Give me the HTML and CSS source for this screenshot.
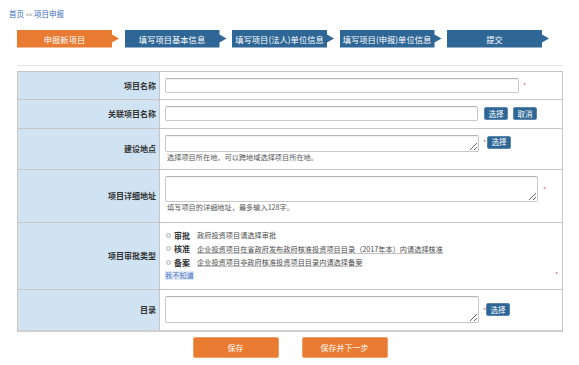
FILE: index.html
```html
<!DOCTYPE html>
<html lang="zh-CN">
<head>
<meta charset="utf-8">
<title>项目申报</title>
<link rel="stylesheet" href="styles.css">
</head>
<body>
<div class="crumb"><a class="crumb-link">首页</a> <span class="crumb-sep">&gt;&gt;</span> <a class="crumb-link">项目申报</a></div>
<div class="main">
  <div class="steps">
    <div class="step step-active">申报新项目</div>
    <div class="step">填写项目基本信息</div>
    <div class="step">填写项目(法人)单位信息</div>
    <div class="step">填写项目(申报)单位信息</div>
    <div class="step">提交</div>
  </div>
  <div class="rule"></div>
  <div class="form">
    <div class="row r1">
      <div class="label">项目名称</div>
      <div class="cell cell-center">
        <input class="field w-name" type="text"><span class="req">*</span>
      </div>
    </div>
    <div class="row r2">
      <div class="label">关联项目名称</div>
      <div class="cell cell-center">
        <input class="field w-rel" type="text">
        <button class="sbtn first">选择</button><button class="sbtn">取消</button>
      </div>
    </div>
    <div class="row r3">
      <div class="label">建设地点</div>
      <div class="cell cell-col">
        <div class="line-top">
          <textarea class="area w-loc h-loc"></textarea><span class="req">*</span><button class="sbtn">选择</button>
        </div>
        <div class="help">选择项目所在地，可以跨地域选择项目所在地。</div>
      </div>
    </div>
    <div class="row r4">
      <div class="label">项目详细地址</div>
      <div class="cell cell-col">
        <div class="line-mid">
          <textarea class="area w-addr h-addr"></textarea><span class="req req-wide">*</span>
        </div>
        <div class="help">填写项目的详细地址，最多输入128字。</div>
      </div>
    </div>
    <div class="row r5">
      <div class="label">项目审批类型</div>
      <div class="cell cell-types">
        <div class="types">
          <div class="opt"><span class="radio"></span><b class="opt-name">审批</b><span class="opt-desc">政府投资项目请选择审批</span></div>
          <div class="opt"><span class="radio"></span><b class="opt-name">核准</b><span class="opt-desc opt-ul">企业投资项目在省政府发布政府核准投资项目目录（2017年本）内请选择核准</span></div>
          <div class="opt"><span class="radio"></span><b class="opt-name">备案</b><span class="opt-desc opt-ul">企业投资项目非政府核准投资项目目录内请选择备案</span></div>
          <div class="opt"><a class="dunno">我不知道</a></div>
        </div>
        <span class="req req-end">*</span>
      </div>
    </div>
    <div class="row r6">
      <div class="label">目录</div>
      <div class="cell cell-center">
        <textarea class="area w-cat h-cat"></textarea><span class="req">*</span><button class="sbtn">选择</button>
      </div>
    </div>
  </div>
  <div class="actions">
    <button class="bbtn">保存</button>
    <button class="bbtn">保存并下一步</button>
  </div>
</div>
</body>
</html>
```
FILE: styles.css
```css
html, body {
  margin: 0;
  padding: 0;
  background: #ffffff;
}
body {
  font-family: "Noto Sans CJK SC", "Noto Sans", sans-serif;
  color: #333333;
  font-size: 8px;
}
.crumb {
  padding: 9px 0 0 9px;
  font-size: 7.5px;
  line-height: 10px;
  height: 10px;
}
.crumb-link {
  color: #3b6bb8;
}
.crumb-sep {
  color: #888888;
  font-size: 6px;
}
.main {
  margin-left: 17px;
  width: 546px;
}
.steps {
  display: flex;
  gap: 5.5px;
  margin-top: 10.5px;
}
.step {
  width: 95px;
  padding-right: 7px;
  height: 18px;
  line-height: 18px;
  text-align: center;
  color: #ffffff;
  font-size: 8.3px;
  background: #2e6695;
  clip-path: polygon(0 0, 95px 0, 95px 5px, 102px 9px, 95px 13px, 95px 100%, 0 100%);
  white-space: nowrap;
}
.step-active {
  background: #e87a31;
}
.rule {
  margin-top: 17px;
  height: 1px;
  background: #e4e4e4;
}
.form {
  margin-top: 5px;
  border: 1px solid #c6c6c6;
  border-bottom: none;
}
.row {
  display: grid;
  grid-template-columns: 142px 1fr;
  border-bottom: 1px solid #c6c6c6;
}
.r1 { height: 27px; }
.r2 { height: 28px; }
.r3 { height: 40px; }
.r4 { height: 52px; }
.r5 { height: 66px; }
.r6 { height: 40px; }
.r6 { border-bottom: 2px solid #cfcfcf; }
.label {
  background: #cfe3f2;
  border-right: 1px solid #c6c6c6;
  display: flex;
  align-items: center;
  justify-content: flex-end;
  padding-right: 3px;
  font-weight: bold;
  font-size: 8px;
  color: #333333;
}
.cell {
  padding-left: 5px;
  display: flex;
}
.cell-center {
  align-items: center;
}
.cell-col {
  flex-direction: column;
  padding-top: 6px;
}
.line-top {
  display: flex;
  align-items: flex-start;
}
.line-mid {
  display: flex;
  align-items: center;
}
.field, .area {
  box-sizing: border-box;
  border: 1px solid #c9c9c9;
  border-top-color: #b4b4b4;
  border-radius: 2px;
  background: #ffffff;
  box-shadow: inset 0 1px 1px rgba(0, 0, 0, 0.06);
  margin: 0;
  padding: 0 3px;
  font-family: inherit;
  font-size: 8px;
  outline: none;
}
.area {
  resize: both;
  overflow: hidden;
}
.w-name { width: 354px; height: 15px; }
.w-rel { width: 313px; height: 15px; }
.w-loc { width: 314px; }
.h-loc { height: 17px; }
.w-addr { width: 373px; }
.h-addr { height: 26px; }
.w-cat { width: 314px; }
.h-cat { height: 27px; }
.req {
  color: #e45a5a;
  font-size: 7px;
  line-height: 8px;
  margin-left: 4px;
  width: 4px;
}
.line-top .req {
  margin-top: 3px;
}
.req-wide {
  margin-left: 5px;
}
.sbtn {
  box-sizing: border-box;
  height: 12.5px;
  width: 24px;
  padding: 0;
  margin: 0 0 0 5px;
  border: 1px solid #5b86ad;
  border-radius: 2px;
  background: #2e6695;
  color: #ffffff;
  font-family: inherit;
  font-size: 7.5px;
  line-height: 10px;
}
.sbtn.first {
  margin-left: 6px;
}
.line-top .sbtn {
  margin-top: 1.5px;
  margin-left: 0;
}
.r6 .sbtn {
  margin-left: -1px;
}
.help {
  margin-top: 1px;
  padding-left: 2px;
  font-size: 7.2px;
  line-height: 9px;
  color: #555555;
}
.cell-types {
  padding-top: 6px;
  align-items: flex-end;
}
.types {
  display: flex;
  flex-direction: column;
  flex: 1;
  align-self: flex-start;
}
.opt {
  display: flex;
  align-items: center;
  height: 13.5px;
  white-space: nowrap;
}
.radio {
  box-sizing: border-box;
  width: 5px;
  height: 5px;
  border-radius: 50%;
  border: 1px solid #b8b8b8;
  background: #f0f0f0;
  margin-left: 0.5px;
  margin-right: 3.5px;
}
.opt-name {
  width: 23px;
  font-size: 8px;
  color: #333333;
}
.opt-desc {
  font-size: 7.2px;
  color: #4a4a4a;
}
.opt-ul {
  text-decoration: underline;
  text-decoration-color: #c4c4c4;
}
.dunno {
  color: #4b72c4;
  font-size: 7.2px;
  background: #e2ecf8;
  line-height: 9px;
}
.req-end {
  margin: 0 3px 11px 0;
}
.actions {
  display: flex;
  justify-content: center;
  gap: 23px;
  margin-top: 5px;
}
.bbtn {
  width: 86px;
  height: 21px;
  padding: 0;
  border: 1px solid #eea06a;
  border-radius: 2px;
  background: #e87a31;
  color: #ffffff;
  font-family: inherit;
  font-size: 8px;
}
```
